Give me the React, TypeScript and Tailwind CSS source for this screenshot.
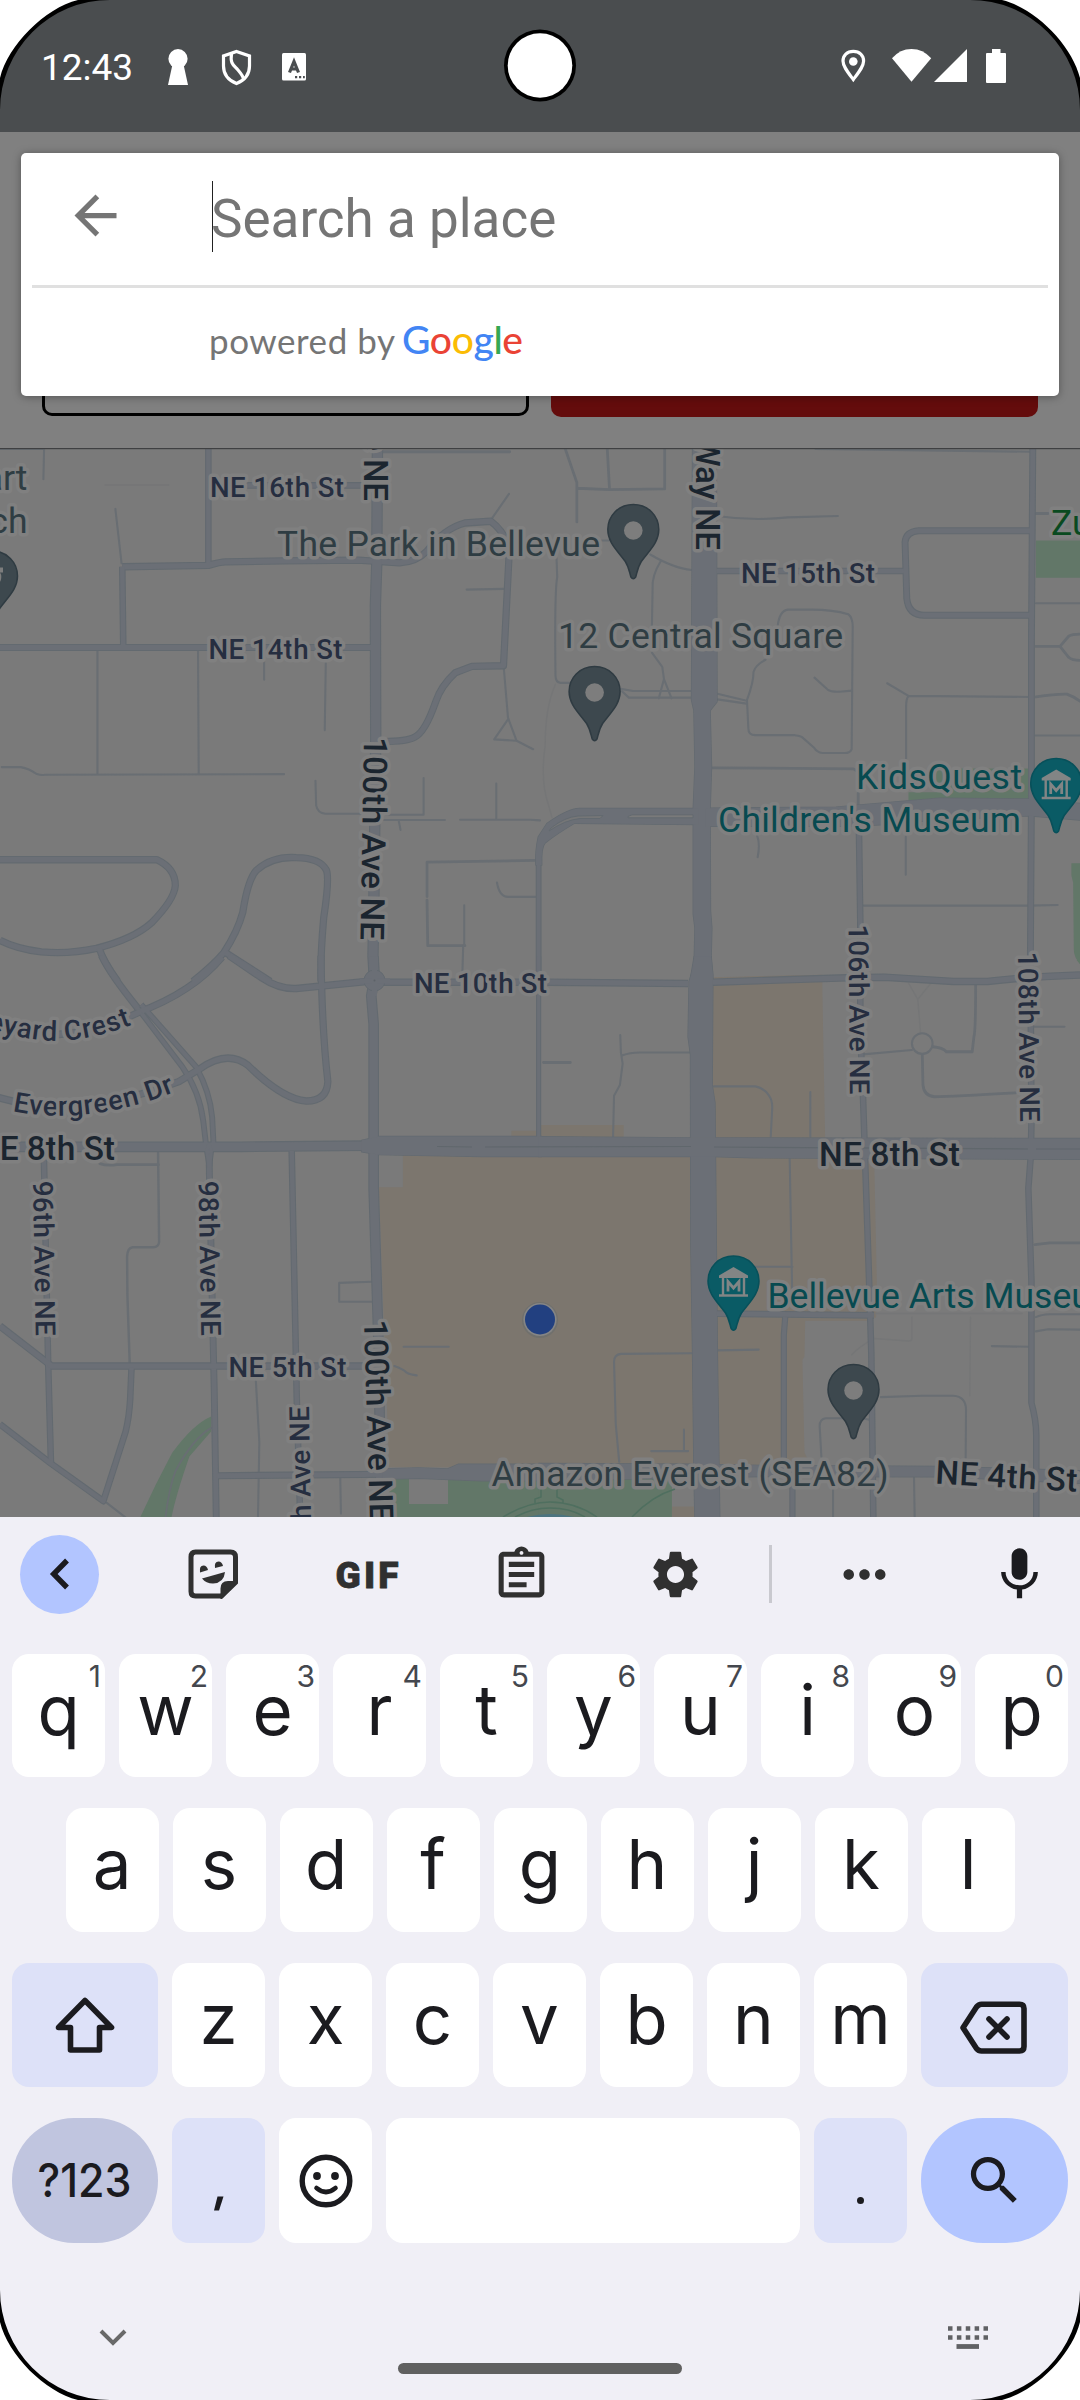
import React from "react";
import {
  MdArrowBack,
  MdMic,
  MdMoreHoriz,
  MdOutlineAssignment,
  MdSearch,
  MdSettings,
} from "react-icons/md";

type Road = [width: number, d: string];

interface Tile {
  transform: string;
  tan?: string;
  green?: string;
  wide?: string[];
  roads: Road[];
  thin: Road[];
  faint?: string;
}

/* The map is stored as four quadrants, each in its own survey units. */
const TILES: Tile[] = [
  {
    transform: "translate(0 430) scale(0.34439 0.35077)",
    roads: [
      [18, "M605 40 V388"],
      [20, "M355 390 L605 386 Q640 376 655 376 L820 373 L1040 371 L1160 379 Q1210 376 1240 345 Q1290 280 1350 265 L1425 260 Q1478 300 1478 360 L1462 672 L1370 674 L1322 692 Q1280 730 1265 775 Q1235 860 1205 875 Q1180 890 1090 888"],
      [18, "M355 390 L358 620"],
      [19, "M0 620 H1090"],
      [18, "M600 158 H1090"],
      [32, "M1096 40 L1094 380 L1090 500 L1091 880 L1085 1400 L1083 1500 L1088 1580"],
      [20, "M0 1225 L455 1225 Q510 1250 509 1300 Q505 1340 440 1405 Q390 1450 280 1478 Q200 1495 120 1488 Q50 1480 0 1455"],
      [20, "M288 1478 Q300 1515 342 1572"],
      [20, "M560 1572 Q620 1525 650 1490 Q690 1430 705 1375 Q720 1280 745 1255 Q790 1215 860 1219 Q930 1220 948 1255 Q957 1280 940 1390 Q930 1500 932 1572"],
      [20, "M655 1490 L785 1572"],
    ],
    thin: [
      [6, "M0 54 H128 L126 140 M335 225 L353 380 M767 660 V712 M946 660 L943 856 M283 628 V980 M575 628 L577 980"],
      [6, "M5 961 H60 Q85 965 105 980 Q120 985 130 983 L825 981"],
      [6, "M916 1000 L918 1070 Q922 1092 945 1094 H1050 M1120 1097 H1230 V992 M1110 1112 H1292 M1158 1115 L1163 1140"],
      [6, "M1336 1111 H1540 L1568 1113 M1441 1008 V1110"],
      [8, "M1240 1330 V1232 L1555 1227 M1240 1340 L1242 1470 H1350 M1100 62 H1480"],
      [6, "M1348 1355 V1470 M1345 1470 L1342 1568 M1443 1290 Q1450 1331 1475 1331 H1555"],
      [6, "M1430 250 L1478 182 M1355 455 L1462 453 M1463 680 L1475 820 L1500 886 L1548 910 M1475 825 L1435 882 L1500 886"],
    ],
    faint: "M305 157 H490",
  },
  {
    transform: "translate(540 430) scale(0.34439 0.35077)",
    tan: "M505 1560 L820 1553 V1568 H505Z",
    green:
      "M1440 315 H1568 V421 H1440Z M1070 1033 H1150 V965 H1420 V1055 H1070Z M1543 1235 H1568 V1520 Q1550 1505 1550 1480 L1548 1290 L1543 1270Z",
    wide: [
      "M443 40 L440 770 L447 800 L450 960 L445 1080 V1380 L450 1420 L448 1500 L435 1575 H502 L497 1500 L499 1420 L495 1370 L494 1080 L498 960 L494 800 L514 775 L512 40Z",
      "M480 1078 L860 1075 L940 1068 L1160 1050 L1420 1052 L1568 1065 V1112 L1420 1100 L1140 1112 Q1000 1128 860 1130 H480Z",
      "M460 1079 H115 Q80 1080 20 1122 L-5 1160 Q-14 1200 -12 1240 L5 1240 Q3 1190 15 1177 Q50 1150 100 1121 L460 1125Z",
    ],
    roads: [
      [18, "M512 402 H1060"],
      [19, "M1430 287 H1100 Q1062 290 1060 320 L1065 480 Q1070 530 1120 528 H1430"],
      [19, "M1431 40 L1427 600 L1427 1040 L1424 1500 L1424 1580"],
      [18, "M926 1130 L930 1400 V1580"],
      [16, "M-4 1230 V1575"],
    ],
    thin: [
      [8, "M500 963 L910 966 L925 975 M924 1035 V1075"],
      [6, "M512 245 Q620 260 720 249 L865 245 M800 54 L1425 62"],
      [8, "M72 50 L107 150 V262 M107 166 L202 170 L362 168 V50 M195 50 L202 170 M1440 238 H1475"],
      [6, "M1440 494 H1568 M1070 758 L1420 761 M1008 722 L1070 758 Q1063 765 1063 790 V950 M1062 1160 V1268 M1437 871 H1568"],
      [8, "M1440 617 H1510 L1535 588 Q1545 582 1568 582 M1510 617 L1535 648 Q1545 657 1568 657 M1440 761 Q1500 752 1530 753 Q1550 760 1568 773"],
      [6, "M630 1155 Q640 1180 632 1218 M940 1356 H1420 L1503 1354"],
      [6, "M48 365 L50 420 Q42 460 45 700 Q45 720 60 721 H85 M320 355 Q390 395 440 399 M350 375 Q325 415 327 450 L325 560"],
      [6, "M325 635 L355 675 L360 710 L382 765 M360 710 L345 765 M235 738 L270 744 H440 M238 745 L258 763 H440"],
      [6, "M690 560 Q695 515 720 512 H790 Q850 512 895 525 Q908 535 908 560 L905 910 Q900 921 885 921 H820 Q805 920 795 905 L760 875 Q755 872 740 870 H625 Q605 870 605 850 L601 770 Q620 720 620 690 Q625 670 655 655"],
      [6, "M515 752 L600 772 M515 768 L600 780 M797 706 L835 740 Q845 747 870 746 L906 743 M150 315 H200"],
    ],
    faint: "M45 725 Q15 790 15 900 Q0 1000 25 1070 L35 1105",
  },
  {
    transform: "translate(0 960) scale(0.34439 0.35714)",
    tan:
      "M1170 540 H1572 V1420 H1130 L1110 900 L1100 636 H1170Z M1485 478 H1572 V500 H1485Z",
    green:
      "M613 1278 Q560 1300 500 1380 Q450 1470 405 1565 H497 Q510 1500 550 1390 L613 1320Z M1130 1450 H1572 V1565 H1130Z",
    wide: [
      "M1050 505 L1100 494 H1572 V550 H1400 L1100 545 L1050 537Z",
      "M1110 1425 L1215 1422 L1300 1425 L1330 1412 H1572 V1458 H1400 L1215 1451 L1110 1454Z",
    ],
    roads: [
      [20, "M295 -12 Q320 40 400 135"],
      [16, "M396 130 L530 300 Q580 370 590 450 L598 515 M410 125 L570 300 Q610 370 616 440 L620 515"],
      [20, "M400 147 Q560 90 645 -8"],
      [20, "M-5 190 Q200 245 410 143"],
      [20, "M665 -12 L760 50 Q810 82 860 80 L1085 58"],
      [20, "M1090 62 H1572"],
      [20, "M932 -12 Q935 200 952 340 Q950 395 890 395 Q820 390 720 295 Q660 250 580 305 L520 340 Q220 450 -5 385"],
      [29, "M0 523 H700 L1060 520"],
      [30, "M1085 -10 L1086 60 L1078 100 L1085 180 V520 L1085 640 L1100 1100 L1106 1570"],
      [19, "M607 515 L608 600 L622 1200 L628 1570"],
      [18, "M127 530 L140 1135 L148 1410"],
      [20, "M0 1025 L150 1137 H1100"],
      [18, "M0 1300 L148 1410 L300 1515 L365 1320 Q375 1280 378 1230 L382 1140"],
      [18, "M847 535 L862 1240 L872 1570"],
      [19, "M630 1444 L1130 1440"],
      [14, "M607 515 L600 535 L608 580 M607 515 L614 535 L608 580"],
    ],
    thin: [
      [8, "M290 570 Q310 577 340 573 H460"],
      [7, "M459 540 L462 790 Q460 804 445 804 H385 Q370 806 369 830 L370 940 L377 1140"],
      [6, "M743 1180 L753 1350 L749 1568 M1080 901 L985 904 V957 H1080 M1172 1083 H1303"],
      [6, "M1145 1137 Q1170 1145 1180 1155 Q1190 1162 1210 1163 M988 1450 L990 1550 M310 1520 L370 1565"],
      [5, "M613 1310 Q560 1340 510 1430 Q490 1480 480 1565"],
    ],
  },
  {
    transform: "translate(540 960) scale(0.34439 0.35714)",
    tan:
      "M500 50 L820 42 L820 90 L828 505 H500Z M-4 462 H243 V505 H-4Z M-4 540 H445 V1420 H-4Z M505 540 H970 L978 900 L976 1000 L955 1010 L770 1010 L768 1110 L762 1120 L768 1380 L790 1420 H515Z M383 1530 H450 V1565 H383Z",
    green: "M-4 1450 H383 V1565 H-4Z M1558 0 H1568 V12Z",
    wide: [
      "M448 -10 L446 20 L433 60 L430 215 L437 265 L438 800 L443 1100 L447 1430 L450 1570 H522 L515 1100 L512 800 L508 400 L500 350 L502 40 L496 -10Z",
      "M-4 495 L440 498 H510 L1568 500 V558 L620 554 L500 550 H-4Z",
      "M-4 1410 L450 1412 L640 1415 L1160 1418 L1568 1430 V1465 L1160 1447 L640 1446 L-4 1458Z",
    ],
    roads: [
      [20, "M20 62 L430 66"],
      [20, "M502 62 L890 50 L1000 48 L1200 60 L1300 60 Q1400 48 1568 42"],
      [14, "M-4 -10 V497"],
      [18, "M930 -10 V200 L938 385 L955 880 L962 1100 L968 1570"],
      [18, "M1424 -10 L1427 455 L1425 550 L1418 640 L1427 900 L1427 1240 Q1441 1290 1441 1330 V1570"],
      [18, "M512 990 L970 995"],
      [17, "M712 1000 L708 1050 V1420"],
      [17, "M733 1450 V1570"],
    ],
    thin: [
      [8, "M10 287 H88"],
      [6, "M233 210 L235 260 L240 290 L232 350 L215 380 L212 500 M240 267 Q260 259 290 259 H435"],
      [6, "M505 354 H625 Q650 358 665 380 Q676 395 674 420 L670 495 M785 370 V495 M725 555 L732 920 M625 859 H733"],
      [6, "M515 1093 L635 1091 M440 1101 L235 1103 Q215 1105 215 1125 L220 1300 L230 1405 M323 1375 H430 M418 1315 V1375"],
      [6, "M930 265 L1080 252 M1430 187 H1523"],
      [8, "M1140 243 Q1170 245 1180 257 H1255 L1260 215 Q1265 200 1265 70 M1110 265 L1112 350 Q1115 380 1145 383 Q1200 382 1380 372 M1437 797 L1480 792 H1568"],
      [6, "M1140 234 A30 29 0 1 1 1080 234 A30 29 0 1 1 1140 234"],
      [6, "M1440 1000 Q1455 993 1480 992 H1568 M1440 1040 L1475 1034 L1568 1035 M1312 1081 L1420 1083"],
      [6, "M990 1224 L1110 1220 H1200 Q1237 1222 1237 1260 L1236 1395 M960 1288 L935 1283 H830 Q812 1285 812 1305 L817 1390 M851 1480 V1565 M1086 1450 L1088 1565"],
    ],
    faint:
      "M1070 65 L1097 110 L1105 205 M1135 65 L1097 110 M975 990 H1400 M1080 1000 V1060 Q1080 1067 1070 1067 L970 1060 Q930 1080 905 1105 M1250 1000 L1248 1220",
  },
];

interface LabelProps {
  x: number;
  y: number;
  size: number;
  length?: number;
  angle?: number;
  anchor?: "start" | "end";
  weight?: number;
  color?: string;
  children: string;
}

const STREET = "#262e40";
const AVENUE = "#1b252f";
const POI = "#2f3d43";
const MUSEUM = "#074a50";

function Label({ x, y, size, length, angle = 0, anchor = "start", weight = 500, color = STREET, children }: LabelProps) {
  return (
    <text
      x={x}
      y={y}
      fontSize={size}
      fontWeight={weight}
      fill={color}
      stroke="#808080"
      strokeWidth={7}
      strokeLinejoin="round"
      paintOrder="stroke"
      textAnchor={anchor}
      textLength={length}
      transform={angle ? `rotate(${angle} ${x} ${y})` : undefined}
    >
      {children}
    </text>
  );
}

function Pin({ x, y, museum = false }: { x: number; y: number; museum?: boolean }) {
  return (
    <g transform={`translate(${x} ${y})`}>
      <path
        d="M0 1 C15 1 25.500 12.500 25.500 26 C25.500 39 16 47 8 58 C4.500 63.500 4 68 2.400 73.500 Q0 77 -2.400 73.500 C-4 68 -4.500 63.500 -8 58 C-16 47 -25.500 39 -25.500 26 C-25.500 12.500 -15 1 0 1Z"
        fill={museum ? "#0a5b65" : "#3d484e"}
        stroke={museum ? "#08505a" : "#2f3b42"}
        strokeWidth="1.500"
      />
      {museum ? (
        <g fill="none" stroke="#828585">
          <path d="M0 12 L14.500 20.500 V23 H-14.500 V20.500Z" fill="#828585" stroke="none" />
          <path d="M-14.500 40.500 H14.500" strokeWidth="2.500" />
          <path d="M-10.500 22 V40 M10.500 22 V40" strokeWidth="2.400" />
          <path d="M-5.500 36.500 V26.500 L0 33 L5.500 26.500 V36.500" strokeWidth="2.800" />
        </g>
      ) : (
        <circle cx="0" cy="27" r="9.300" fill="#7d7d7d" />
      )}
    </g>
  );
}

function MapView() {
  return (
    <svg className="block h-[1069px] w-full" viewBox="0 448 1080 1069" fontFamily="Roboto, sans-serif">
      <rect x="0" y="448" width="1080" height="1069" fill="#7a7a7a" />
      {TILES.map((t, i) => (
        <g key={i} transform={t.transform}>
          {t.tan && <path d={t.tan} fill="#7c766e" />}
          {t.green && <path d={t.green} fill="#627768" />}
        </g>
      ))}
      <path d="M409 1478 H448 V1504 H409Z" fill="#7a7a7a" />
      <g fill="none" stroke="#4f6f5f" strokeWidth="1.500">
        <path d="M503 1517 Q528 1502 550 1502 Q575 1502 597 1517 M515 1517 Q532 1508 550 1508 Q570 1508 585 1517 M535 1503 V1499 L541 1497 V1484 M557 1484 V1497 L563 1500 V1504 M632 1517 Q652 1496 675 1489" />
      </g>
      <path d="M527 1517 Q550 1511 574 1517Z" fill="#4c7480" />
      <g fill="none" strokeLinecap="round" strokeLinejoin="round">
        {TILES.map((t, i) => (
          <g key={i} transform={t.transform}>
            {t.faint && <path d={t.faint} stroke="#757677" strokeWidth="4" />}
            {t.thin.map(([w, d], j) => (
              <path key={j} d={d} stroke="#696e73" strokeWidth={w} />
            ))}
          </g>
        ))}
      </g>
      <g fill="none" stroke="#636a70" strokeLinejoin="round">
        {TILES.map((t, i) => (
          <g key={i} transform={t.transform}>
            {t.roads.map(([w, d], j) => (
              <path key={j} d={d} strokeWidth={w + 1} />
            ))}
            {t.wide?.map((d, j) => (
              <path key={`w${j}`} d={d} strokeWidth="4" />
            ))}
          </g>
        ))}
      </g>
      <g fill="none" stroke="#6b6f76" strokeLinejoin="round">
        {TILES.map((t, i) => (
          <g key={i} transform={t.transform}>
            {t.roads.map(([w, d], j) => (
              <path key={j} d={d} strokeWidth={w - 5} />
            ))}
            {t.wide?.map((d, j) => (
              <path key={`w${j}`} d={d} fill="#6b6f76" stroke="none" />
            ))}
          </g>
        ))}
      </g>
      <circle cx="374.500" cy="980.500" r="10.500" fill="#6b6f76" stroke="#636a70" />
      <path d="M374.500 966 V996 M360 981 H390" stroke="#6b6f76" strokeWidth="5" />
      <circle cx="374.500" cy="980.500" r="1" fill="#5d6268" />
      {/* medians */}
      <path d="M628 816.500 L632 814.800 H693 V817.800 H628Z" fill="#7a7a7a" stroke="#636a70" />
      <path d="M551 828 Q565 817 578 816 L603 815.500 L600 818.500 H580 Q565 820 549 831Z" fill="#757677" stroke="#636a70" />
      <path d="M437 1146.500 L472 1147 M485 1147 L691 1146.500 M714 1147 L1028 1149 M1036 1149 H1080" stroke="#60676c" strokeWidth="1.200" />

      <Label x={210} y={496.500} size={27.700} length={134}>NE 16th St</Label>
      <Label x={208.500} y={659} size={27.700} length={134}>NE 14th St</Label>
      <Label x={741} y={582.500} size={27.700} length={134}>NE 15th St</Label>
      <Label x={414} y={992.500} size={27.700} length={133}>NE 10th St</Label>
      <Label x={228.500} y={1376.500} size={27.700} length={118}>NE 5th St</Label>
      <Label x={363.500} y={501} size={33} angle={90} anchor="end" color={AVENUE}>100th Ave NE</Label>
      <Label x={364} y={737} size={33} length={203} angle={91} color={AVENUE}>100th Ave NE</Label>
      <Label x={364} y={1320} size={33} length={202} angle={88.300} color={AVENUE}>100th Ave NE</Label>
      <Label x={696} y={550} size={33} angle={90} anchor="end" color={AVENUE}>Bellevue Way NE</Label>
      <Label x={848.500} y={924.500} size={27.700} length={170} angle={89.500}>106th Ave NE</Label>
      <Label x={1018} y={952} size={27.700} length={170} angle={89.300}>108th Ave NE</Label>
      <Label x={33} y={1181} size={27.700} length={155} angle={89}>96th Ave NE</Label>
      <Label x={198.500} y={1181} size={27.700} length={155} angle={89}>98th Ave NE</Label>
      <Label x={309} y={1406} size={27.700} length={156} angle={-91} anchor="end">97th Ave NE</Label>
      <Label x={-24} y={1160} size={33.500} length={139} color={AVENUE}>NE 8th St</Label>
      <Label x={819} y={1165.500} size={33.500} length={141} color={AVENUE}>NE 8th St</Label>
      <Label x={935} y={1483.500} size={33} length={142} angle={3.300} color={AVENUE}>NE 4th St</Label>

      <defs>
        <path id="crest" d="M-80 1010 Q0 1036 45 1040.500 Q85 1043 132.500 1024.500" />
        <path id="evergreen" d="M12.500 1111 Q90 1127 182 1089" />
      </defs>
      <g fontSize="27.700" fontWeight="500" fill={STREET} stroke="#808080" strokeWidth="7" strokeLinejoin="round" paintOrder="stroke">
        <text textAnchor="end" letterSpacing="0.700">
          <textPath href="#crest" startOffset="100%">Vineyard Crest</textPath>
        </text>
        <text letterSpacing="0.700">
          <textPath href="#evergreen">Evergreen Dr</textPath>
        </text>
      </g>

      <Label x={277} y={556} size={35.500} weight={400} length={323} color={POI}>The Park in Bellevue</Label>
      <Label x={558} y={648} size={35.500} weight={400} length={285} color={POI}>12 Central Square</Label>
      <Label x={491.500} y={1485.500} size={35.500} weight={400} length={397} color={POI}>Amazon Everest (SEA82)</Label>
      <Label x={27.500} y={489.500} size={35.500} weight={400} anchor="end" color={POI}>Heart</Label>
      <Label x={27.500} y={533} size={35.500} weight={400} anchor="end" color={POI}>Church</Label>
      <Label x={1051} y={535} size={35.500} weight={400} color="#0a4a20">Zuma</Label>
      <Label x={856} y={789} size={35.500} weight={400} length={166} color={MUSEUM}>KidsQuest</Label>
      <Label x={718} y={831.500} size={35.500} weight={400} length={303} color={MUSEUM}>Children's Museum</Label>
      <Label x={767.500} y={1308} size={35.500} weight={400} color={MUSEUM}>Bellevue Arts Museum</Label>

      <Pin x={-8} y={550} />
      <path d="M-20 565 H3.500 V571 H-5 V590 H-20Z" fill="#3d484e" />
      <path d="M-12 567.500 H3 V572.500 H-12Z" fill="#7d7d7d" />
      <Pin x={633.300} y={503.500} />
      <Pin x={594.600} y={665.500} />
      <Pin x={853.500} y={1363.500} />
      <Pin x={1056.200} y={757.500} museum />
      <Pin x={733.500} y={1255} museum />

      <circle cx="540" cy="1320" r="18" fill="#70706d" />
      <circle cx="540" cy="1319.500" r="16.600" fill="#858585" />
      <circle cx="540" cy="1319.500" r="15" fill="#224080" />
      <rect x="0" y="448" width="1080" height="1.200" fill="#3f4042" />
    </svg>
  );
}

function StatusBar() {
  return (
    <header className="relative flex h-[132px] items-start justify-between bg-[#4a4d4f] pr-[74px] pl-[41px] text-white">
      <div className="flex items-start pt-[46px]">
        <span className="mt-[1px] w-[127px] text-[37px] leading-[42px]">12:43</span>
        <svg className="h-[40px] w-[150px]" viewBox="168 46 150 40" fill="#fff">
          <circle cx="178" cy="58.700" r="9.600" />
          <path d="M173 62 H183 L188 85 H168Z" />
          <path d="M236.500 51.500 L249.500 56 V66 C249.500 75 244 80.500 236.500 83.500 C229 80.500 223.500 75 223.500 66 V56Z" fill="none" stroke="#fff" strokeWidth="3.200" />
          <path d="M231.500 53.500 C230 64 233.500 65 238 70 C241 73.500 243 76 243.500 79" fill="none" stroke="#fff" strokeWidth="3.200" />
          <rect x="282" y="53" width="24" height="27.500" rx="1.500" />
          <path d="M289.500 72.500 L294 61.500 L298.500 72.500 M291 69 H297" fill="none" stroke="#4a4d4f" strokeWidth="3.200" />
          <path d="M295 76 h2.200 v2.200 h-2.200z M299 76 h2.200 v2.200 h-2.200z M303 76 h1.800 v2.200 h-1.800z" fill="#4a4d4f" />
        </svg>
      </div>
      <svg className="absolute top-[28px] left-[503px] h-[74px] w-[74px]" viewBox="0 0 74 74">
        <circle cx="37" cy="37.500" r="36" fill="#000" />
        <circle cx="37" cy="37.500" r="32.300" fill="#fff" />
      </svg>
      <svg className="mt-[46px] h-[40px] w-[166px]" viewBox="840 46 166 40" fill="#fff">
        <path d="M853.300 51.300 C847 51.300 843 55.500 843 61 C843 66.500 848 72.500 853.300 79.500 C858.600 72.500 863.600 66.500 863.600 61 C863.600 55.500 859.600 51.300 853.300 51.300Z" fill="none" stroke="#fff" strokeWidth="3.200" />
        <circle cx="853.300" cy="61.500" r="4.300" />
        <path d="M911.500 81.800 L892 58.300 Q900 49 911.500 49 Q923 49 931.200 58.300Z" />
        <path d="M967 49 V82 H934Z" />
        <path d="M992 49 H1000.500 V53 H1005 Q1006 53 1006 54 V82 Q1006 83 1005 83 H987 Q986 83 986 82 V54 Q986 53 987 53 H992Z" />
      </svg>
    </header>
  );
}

function SearchDialog() {
  return (
    <section className="absolute top-[153px] left-[21px] flex h-[243px] w-[1038px] flex-col rounded-[5px] bg-white shadow-[0_1px_8px_rgba(0,0,0,0.35)]">
      <div className="flex h-[132px] items-start">
        <MdArrowBack className="mt-[31px] ml-[43px] size-[63px] text-[#757575]" />
        <div className="mt-[28px] ml-[85px] h-[71px] w-[1px] bg-[#212121]" />
        <span className="mt-[32px] -ml-[2px] text-[53px] leading-[68px] whitespace-nowrap text-[#757575]">Search a place</span>
      </div>
      <div className="mx-[11px] h-[3px] bg-[#e0e0e0]" />
      <svg className="mt-[24px] ml-[185px] h-[60px] w-[330px]" viewBox="206 312 330 60" fontFamily="Lato, sans-serif">
        <text x="209" y="353.500" fontSize="35" textLength="186" fill="#757575">powered by</text>
        <text x="402" y="354" fontSize="39" fontWeight="500" stroke="none" textLength="121">
          <tspan fill="#4285f4">G</tspan>
          <tspan fill="#ea4335">o</tspan>
          <tspan fill="#fbbc05">o</tspan>
          <tspan fill="#4285f4">g</tspan>
          <tspan fill="#34a853">l</tspan>
          <tspan fill="#ea4335">e</tspan>
        </text>
      </svg>
    </section>
  );
}

function Toolbar() {
  return (
    <div className="flex h-[114px] items-center text-[#303030]">
      <div className="flex w-[136.500px] pl-[20px]">
        <div className="flex size-[79px] items-center justify-center rounded-full bg-[#b2c5ff]">
          <svg className="size-[40px]" viewBox="0 0 40 40" fill="none" stroke="#1b1b1f" strokeWidth="5.400">
            <path d="M27 6.500 L13.700 20 L27 33.500" />
          </svg>
        </div>
      </div>
      <div className="flex w-[153px] justify-center">
        <svg className="h-[50px] w-[50px]" viewBox="188.500 1549.500 50 50" fill="none" stroke="currentColor" strokeWidth="5">
          <path d="M196 1552.500 H231 Q236 1552.500 236 1557.500 V1583 L222 1596.500 H196 Q191.500 1596.500 191.500 1592 V1557.500 Q191.500 1552.500 196 1552.500Z" />
          <path d="M222.500 1597 V1589 Q222.500 1583 228.500 1583 H236Z" fill="currentColor" strokeWidth="3" />
          <path d="M202.500 1579 L225.500 1572.500 Q224.500 1583.500 213.500 1584 Q206.500 1584 202.500 1579Z" fill="currentColor" stroke="none" />
          <path d="M200.500 1573 Q199.500 1566 204 1566 Q207.500 1566 208.500 1570.500Z M215.500 1568.500 Q214.500 1562 219 1562 Q222.500 1562 223.500 1566.500Z" fill="currentColor" stroke="none" />
        </svg>
      </div>
      <div className="flex w-[154px] justify-center">
        <svg className="h-[40px] w-[66px]" viewBox="0 0 66 40" fontFamily="Roboto, sans-serif">
          <text x="1.500" y="33.500" fontSize="37" fontWeight="900" fill="currentColor" stroke="currentColor" strokeWidth="0.800" textLength="63">GIF</text>
        </svg>
      </div>
      <div className="flex w-[155px] justify-center">
        <MdOutlineAssignment className="size-[61px]" />
      </div>
      <div className="flex w-[154px] justify-center">
        <MdSettings className="size-[57px]" />
      </div>
      <div className="flex w-[35px] justify-center">
        <div className="h-[58px] w-[3px] bg-[#c9c9cf]" />
      </div>
      <div className="flex w-[154px] justify-center">
        <MdMoreHoriz className="size-[63px]" />
      </div>
      <div className="flex w-[138.500px] justify-end pr-[29px] text-[#1b1b1f]">
        <MdMic className="size-[63px]" />
      </div>
    </div>
  );
}

function LetterKey({ letter, hint }: { letter: string; hint?: string }) {
  return (
    <div className="relative flex h-full w-[93px] justify-center rounded-[17px] bg-white font-['Inter'] text-[#1b1b1f]">
      <span className="pt-[12px] text-[69px] leading-[88px]">{letter}</span>
      {hint && (
        <span className="absolute top-[6px] right-[4px] text-[30px] leading-[32px] text-[#44474e]">{hint}</span>
      )}
    </div>
  );
}

const HINTED = ["q1", "w2", "e3", "r4", "t5", "y6", "u7", "i8", "o9", "p0"];

function Keyboard() {
  return (
    <section className="flex h-[883px] flex-col bg-[#f0eff6]">
      <Toolbar />
      <div className="mt-[23px] flex flex-col gap-[31px] px-3">
        <div className="flex h-[123px] gap-[14px]">
          {HINTED.map((k) => (
            <LetterKey key={k} letter={k[0]} hint={k[1]} />
          ))}
        </div>
        <div className="flex h-[124px] gap-[14px] pl-[53.500px]">
          {["a", "s", "d", "f", "g", "h", "j", "k", "l"].map((k) => (
            <LetterKey key={k} letter={k} />
          ))}
        </div>
        <div className="flex h-[124px] gap-[14px]">
          <div className="flex w-[146px] items-center justify-center rounded-[17px] bg-[#dde1f8]">
            <svg className="h-[60px] w-[60px]" viewBox="55 1994.500 60 60" fill="none" stroke="#1b1b1f" strokeWidth="5.600" strokeLinejoin="round">
              <path d="M85 2000 L111.500 2027 H99.500 V2049.500 H70.500 V2027 H58.500Z" />
            </svg>
          </div>
          {["z", "x", "c", "v", "b", "n", "m"].map((k) => (
            <LetterKey key={k} letter={k} />
          ))}
          <div className="flex w-[147px] items-center justify-center rounded-[17px] bg-[#dde1f8]">
            <svg className="h-[60px] w-[70px]" viewBox="959.500 1995 70 60" fill="none" stroke="#1b1b1f" strokeWidth="5.600">
              <path d="M981 2004.300 H1019 Q1023.500 2004.300 1023.500 2008.500 V2046.500 Q1023.500 2051 1019 2051 H981 Q978 2051 976 2048.500 L962.500 2027.700 L976 2007 Q978 2004.300 981 2004.300Z" strokeLinejoin="round" />
              <path d="M988.500 2019 L1006.500 2037 M1006.500 2019 L988.500 2037" strokeLinecap="round" />
            </svg>
          </div>
        </div>
        <div className="flex h-[125px] gap-[14px]">
          <div className="flex w-[146px] items-center justify-center rounded-[62px] bg-[#c0c5df] text-[#1b1b1f]">
            <svg className="h-[50px] w-[96px]" viewBox="0 0 96 50">
              <text x="0.500" y="40.500" fontFamily="Inter, sans-serif" fontSize="46" fontWeight="500" fill="currentColor" textLength="94" lengthAdjust="spacingAndGlyphs">?123</text>
            </svg>
          </div>
          <div className="flex w-[93px] justify-center rounded-[17px] bg-[#dde1f8]">
            <svg className="mt-[76px] h-[20px] w-[14px]" viewBox="0 0 14 20">
              <path d="M5.500 2.500 H11.500 L7 16.500 H2Z" fill="#1b1b1f" />
            </svg>
          </div>
          <div className="flex w-[93px] items-center justify-center rounded-[17px] bg-white">
            <svg className="size-[54px]" viewBox="0 0 54 54" fill="none" stroke="#1b1b1f" strokeWidth="5.400">
              <circle cx="27" cy="27" r="23.800" />
              <path d="M17.500 34 Q27 42 36.500 34" strokeWidth="4.600" strokeLinecap="round" />
              <circle cx="18" cy="22" r="3.900" fill="#1b1b1f" stroke="none" />
              <circle cx="36" cy="22" r="3.900" fill="#1b1b1f" stroke="none" />
            </svg>
          </div>
          <div className="w-[414px] rounded-[17px] bg-white" />
          <div className="flex w-[93px] justify-center rounded-[17px] bg-[#dde1f8]">
            <div className="mt-[78.500px] size-[7.600px] rounded-full bg-[#1b1b1f]" />
          </div>
          <div className="flex w-[147px] items-center justify-center rounded-[62px] bg-[#b2c5ff]">
            <MdSearch className="size-[63px] text-[#1b1b1f]" />
          </div>
        </div>
      </div>
      <div className="mt-[80px] flex items-start justify-between pr-[90px] pl-[98px]">
        <svg className="mt-[4px] h-[22px] w-[30px]" viewBox="98 2327 30 22" fill="none" stroke="#696969" strokeWidth="4">
          <path d="M101 2331 L113 2343 L125 2331" />
        </svg>
        <div className="mt-[40px] ml-[6px] h-[11px] w-[284px] rounded-full bg-[#606060]" />
        <svg className="mt-[2px] h-[26px] w-[44px]" viewBox="946 2325 44 26" fill="none" stroke="#606164">
          <path d="M948 2328.500 H988 M948 2337.500 H988" strokeWidth="4.500" strokeDasharray="4.500 4.375" />
          <path d="M956.500 2346.500 H979" strokeWidth="4.800" />
        </svg>
      </div>
    </section>
  );
}

const CORNERS = [
  "top-0 left-0",
  "top-0 right-0 -scale-x-100",
  "bottom-0 left-0 -scale-y-100",
  "bottom-0 right-0 -scale-100",
];

export default function App() {
  return (
    <div className="relative h-[2400px] w-[1080px] overflow-hidden bg-[#808080] font-['Roboto',sans-serif]">
      <StatusBar />
      <div className="flex h-[316px] items-end gap-[22px] px-[42px] pb-[31px]">
        <div className="mb-[1px] h-[132px] w-[487px] rounded-[10px] border-[3px] border-black" />
        <div className="h-[132px] w-[487px] rounded-[10px] bg-[#640c0c]" />
      </div>
      <MapView />
      <Keyboard />
      <SearchDialog />
      {CORNERS.map((place) => (
        <svg key={place} className={`absolute size-[116px] ${place}`} viewBox="0 0 116 116">
          <path d="M0 0 H110 A110 110 0 0 0 0 110Z" fill="#000" />
          <path d="M0 0 H78 C45 8 8 45 0 78Z" fill="#fff" />
        </svg>
      ))}
    </div>
  );
}
